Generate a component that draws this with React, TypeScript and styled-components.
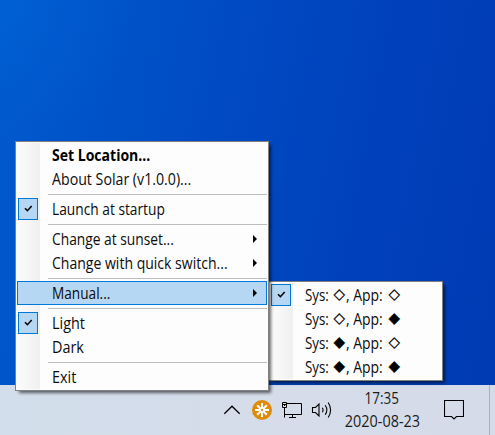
import React from "react";
import styled, { createGlobalStyle, css } from "styled-components";

const GlobalStyle = createGlobalStyle`
  * { box-sizing: border-box; }
  body { margin: 0; overflow: hidden; }
`;

const Desktop = styled.main`
  position: relative;
  display: flex;
  flex-direction: column;
  width: 495px;
  height: 435px;
  overflow: hidden;
  font-family: "Open Sans", "Noto Sans", sans-serif;
  font-size: 15.5px;
  color: #0c0c0c;
  cursor: default;
`;

const Wallpaper = styled.div`
  flex: 1;
  background:
    radial-gradient(circle at 0 0, rgba(0, 104, 218, 0.45), rgba(0, 90, 208, 0) 140px),
    linear-gradient(101deg, #005acd 0%, #004cc4 38%, #0041bb 70%, #003bb3 100%);
`;

const Taskbar = styled.footer`
  display: flex;
  align-items: stretch;
  justify-content: flex-end;
  height: 50px;
  padding-right: 5px;
  background: linear-gradient(90deg, #d2deeb 0%, #d5dcea 50%, #d5dbe9 100%);
`;

const TrayIcon = styled.div`
  display: flex;
  align-items: center;
  justify-content: center;
  width: 30px;
  height: 50px;
  svg { display: block; }
`;

const ActionCenter = styled(TrayIcon)`
  width: 54px;
  margin-right: 8px;
`;

const Clock = styled.div`
  display: flex;
  flex-direction: column;
  align-items: center;
  width: 90px;
  padding-top: 2px;
  line-height: 23px;
`;

const ShowDesktop = styled.div`
  width: 1px;
  background: #aab0bd;
`;

const Menu = styled.ul<{ $x: number; $y: number; $width: number }>`
  position: absolute;
  left: ${(p) => p.$x}px;
  top: ${(p) => p.$y}px;
  width: ${(p) => p.$width}px;
  margin: 0;
  padding: 1px;
  list-style: none;
  border: 1px solid #808080;
  background:
    linear-gradient(90deg, #fcfcfc, #f0f0f0) 0 1px / 24px calc(100% - 2px) no-repeat,
    #fdfdfd;
  box-shadow: 3px 3px 3px -1px rgba(0, 0, 0, 0.58);
`;

const Item = styled.li<{ $active?: boolean; $bold?: boolean }>`
  display: grid;
  grid-template-columns: 35px 1fr 15px;
  align-items: center;
  height: 24px;
  white-space: nowrap;
  ${(p) => p.$bold && css`font-weight: 700; color: #000;`}
  ${(p) => p.$active && css`
    background: #b5d7f3;
    box-shadow: inset 0 0 0 1px #0078d7;
  `}
`;

const Separator = styled.li`
  height: 6px;
  margin-left: 31px;
  background: linear-gradient(#bdbdbd, #bdbdbd) 0 3px / 100% 1px no-repeat;
`;

const CheckBox = styled.span`
  display: grid;
  place-items: center;
  width: 20px;
  height: 22px;
  margin-left: 1px;
  border: 1px solid #0078d7;
  background: #b5d7f3;
  svg { display: block; }
`;

const Label = styled.span<{ $stretch: number }>`
  display: inline-block;
  justify-self: start;
  padding-bottom: 1px;
  line-height: 22px;
  transform: scaleX(${(p) => p.$stretch});
  transform-origin: left center;
`;

const ClockText = styled.span<{ $stretch: number }>`
  transform: scaleX(${(p) => p.$stretch});
  color: #1a1c20;
`;

const ModeLabel = styled.span`
  display: grid;
  grid-template-columns: 28.5px 12.5px 42.5px 13px;
  align-items: center;
`;

const Diamond = styled.span`
  padding-bottom: 2px;
  font-family: "DejaVu Sans", sans-serif;
  font-size: 15px;
  line-height: 22px;
  color: #000;
  -webkit-text-stroke: 0.25px #000;
`;

const Check = () => (
  <CheckBox>
    <svg width="18" height="20" viewBox="0 0 18 20">
      <path d="M6 9.300l2.400 2.400L12.700 7" fill="none" stroke="#000" strokeWidth="1.600" />
    </svg>
  </CheckBox>
);

const Arrow = () => (
  <svg width="6" height="8" viewBox="0 0 6 8">
    <path d="M1 0l4 4-4 4z" fill="#000" />
  </svg>
);

type Entry =
  | "separator"
  | { text: string; stretch: number; bold?: boolean; checked?: boolean; submenu?: boolean; active?: boolean };

const entries: Entry[] = [
  { text: "Set Location...", stretch: 0.905, bold: true },
  { text: "About Solar (v1.0.0)...", stretch: 0.915 },
  "separator",
  { text: "Launch at startup", stretch: 0.887, checked: true },
  "separator",
  { text: "Change at sunset...", stretch: 0.89, submenu: true },
  { text: "Change with quick switch...", stretch: 0.905, submenu: true },
  "separator",
  { text: "Manual...", stretch: 0.88, submenu: true, active: true },
  "separator",
  { text: "Light", stretch: 0.93, checked: true },
  { text: "Dark", stretch: 0.93 },
  "separator",
  { text: "Exit", stretch: 0.93 },
];

const modes = [
  { sys: "◇", app: "◇", checked: true },
  { sys: "◇", app: "◆" },
  { sys: "◆", app: "◇" },
  { sys: "◆", app: "◆" },
];

export default function App() {
  return (
    <Desktop>
      <GlobalStyle />
      <Wallpaper />
      <Taskbar>
        <TrayIcon>
          <svg width="18" height="10" viewBox="0 0 18 10">
            <path d="M1.300 8.800L9 1.200l7.700 7.600" fill="none" stroke="#000" strokeWidth="1.250" />
          </svg>
        </TrayIcon>
        <TrayIcon>
          <svg width="20" height="20" viewBox="0 0 20 20">
            <circle cx="10" cy="10" r="10" fill="#df8a09" />
            <g stroke="#fff" strokeWidth="2">
              <path d="M10 3v5.800M10 11.200V17M3 10h5.800M11.200 10H17" />
              <path d="M5.200 5.200l4 4M10.800 10.800l4 4M14.800 5.200l-4 4M9.200 10.800l-4 4" />
            </g>
          </svg>
        </TrayIcon>
        <TrayIcon>
          <svg width="20" height="18" viewBox="0 0 20 18" fill="none" stroke="#000">
            <path d="M5 2.500h14.500v11H2.500M10.500 13.500v3M7 16.500h7M2.500 6v10.500" />
            <path d="M.5 1.500h4v5h-4zM.5 3.500h4M2.500 3v2" />
          </svg>
        </TrayIcon>
        <TrayIcon>
          <svg width="22" height="20" viewBox="0 0 22 20" fill="none" stroke="#000" strokeWidth="1.100">
            <path d="M1.500 7.500h3l3.500-3.500v12l-3.500-3.500h-3z" />
            <path d="M11.300 7.800q1.600 2.200 0 4.400M14.200 5.300q3.300 4.700 0 9.400M17.200 2.500q4.800 7.500 0 15" />
          </svg>
        </TrayIcon>
        <Clock>
          <ClockText $stretch={0.87}>17:35</ClockText>
          <ClockText $stretch={0.93}>2020-08-23</ClockText>
        </Clock>
        <ActionCenter>
          <svg width="20" height="20" viewBox="0 0 20 20">
            <path d="M.5.5h19v16h-7L10 19l-2.500-2.500h-7z" fill="none" stroke="#000" strokeWidth="1.100" />
          </svg>
        </ActionCenter>
        <ShowDesktop />
      </Taskbar>

      <Menu $x={268} $y={281} $width={175}>
        {modes.map((mode) => (
          <Item key={mode.sys + mode.app}>
            {mode.checked ? <Check /> : <span />}
            <ModeLabel>
              <Label $stretch={0.86}>Sys:</Label>
              <Diamond>{mode.sys}</Diamond>
              <Label $stretch={0.9}>, App:</Label>
              <Diamond>{mode.app}</Diamond>
            </ModeLabel>
          </Item>
        ))}
      </Menu>

      <Menu $x={15} $y={141} $width={254}>
        {entries.map((entry, index) =>
          entry === "separator" ? (
            <Separator key={index} />
          ) : (
            <Item key={index} $active={entry.active} $bold={entry.bold}>
              {entry.checked ? <Check /> : <span />}
              <Label $stretch={entry.stretch}>{entry.text}</Label>
              {entry.submenu && <Arrow />}
            </Item>
          )
        )}
      </Menu>
    </Desktop>
  );
}
